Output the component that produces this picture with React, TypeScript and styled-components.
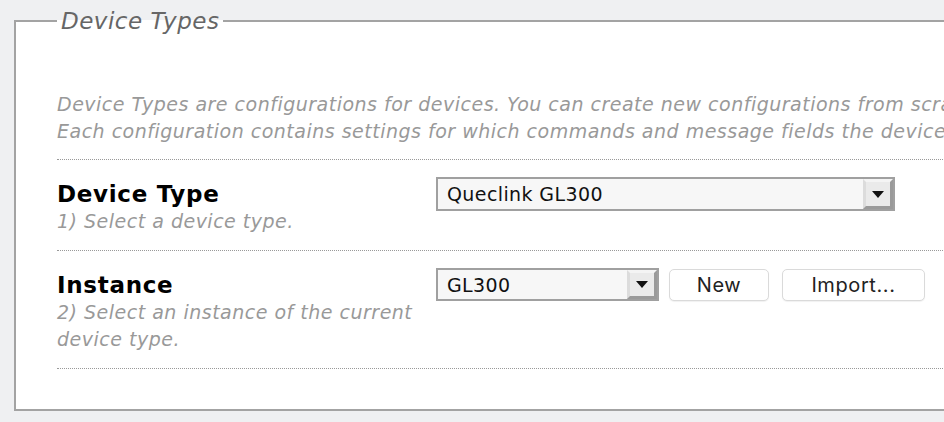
import React from "react";
import styled, { createGlobalStyle } from "styled-components";

const Global = createGlobalStyle`
  html, body { margin: 0; padding: 0; background: #eff0f2; overflow: hidden; }
  body { font-family: "DejaVu Sans", Verdana, sans-serif; }
`;

const Page = styled.div`
  width: 944px;
  height: 422px;
  overflow: hidden;
  padding: 8px 0 0 14px;
  box-sizing: border-box;
`;

const Fieldset = styled.fieldset`
  width: 1100px;
  margin: 0;
  padding: 57px 0 40px 41px;
  border: 2px solid #a3a3a3;
  background: #fff;
  box-sizing: border-box;
`;

const Legend = styled.legend`
  padding: 0 4px;
  font-size: 23px;
  letter-spacing: 0.5px;
  font-style: italic;
  color: #666;
  line-height: 26px;
`;

const Description = styled.p`
  margin: 0;
  font-size: 19px;
  letter-spacing: 0.5px;
  font-style: italic;
  color: #999;
  line-height: 27px;
  white-space: nowrap;
  padding-bottom: 14px;
  border-bottom: 1px dotted #999;
`;

const Row = styled.div`
  display: grid;
  grid-template-columns: 379px 1fr;
  align-items: start;
  padding: 17px 0 15px;
  border-bottom: 1px dotted #999;
`;

const Label = styled.div`
  display: flex;
  flex-direction: column;
  padding-top: 3px;
`;

const Title = styled.div`
  font-size: 23px;
  letter-spacing: 0.7px;
  font-weight: bold;
  color: #000;
  line-height: 28px;
`;

const Hint = styled.div`
  font-size: 19px;
  letter-spacing: 0.5px;
  font-style: italic;
  color: #999;
  line-height: 27px;
  width: 370px;
`;

const Controls = styled.div`
  display: flex;
  align-items: center;
`;

const Select = styled.div<{ $w: number; $h: number }>`
  width: ${(p) => p.$w}px;
  height: ${(p) => p.$h}px;
  box-sizing: border-box;
  border: 2px solid #a0a0a0;
  background: #f7f7f7;
  display: flex;
  align-items: stretch;
  font-size: 19px;
  letter-spacing: 0.4px;
  color: #111;
`;

const SelectText = styled.div`
  flex: 1;
  display: flex;
  align-items: center;
  padding-left: 9px;
`;

const Arrow = styled.div`
  width: 30px;
  box-sizing: border-box;
  background: #eaeaea;
  border-style: solid;
  border-width: 3px;
  border-color: #f4f4f4 #9a9a9a #9a9a9a #dcdcdc;
  display: flex;
  align-items: center;
  justify-content: center;
`;

const Tri = styled.div`
  width: 0;
  height: 0;
  border-left: 6px solid transparent;
  border-right: 6px solid transparent;
  border-top: 7px solid #111;
`;

const Button = styled.button<{ $w: number; $ml: number }>`
  width: ${(p) => p.$w}px;
  margin-left: ${(p) => p.$ml}px;
  height: 32px;
  box-sizing: border-box;
  border: 1px solid #dadada;
  border-radius: 5px;
  background: #fff;
  font-family: Inter, "Liberation Sans", Arial, sans-serif;
  font-size: 20px;
  letter-spacing: 0.6px;
  color: #222;
  padding: 0;
  box-shadow: 0 1px 1px rgba(0,0,0,0.06);
`;

export default function App() {
  return (
    <Page>
      <Global />
      <Fieldset>
        <Legend>Device Types</Legend>
        <Description>
          Device Types are configurations for devices. You can create new configurations from scratch or import existing ones.
          <br />
          Each configuration contains settings for which commands and message fields the device supports.
        </Description>
        <Row>
          <Label>
            <Title>Device Type</Title>
            <Hint>1) Select a device type.</Hint>
          </Label>
          <Controls>
            <Select $w={459} $h={34}>
              <SelectText>Queclink GL300</SelectText>
              <Arrow><Tri /></Arrow>
            </Select>
          </Controls>
        </Row>
        <Row>
          <Label>
            <Title>Instance</Title>
            <Hint>2) Select an instance of the current device type.</Hint>
          </Label>
          <Controls>
            <Select $w={223} $h={33}>
              <SelectText>GL300</SelectText>
              <Arrow><Tri /></Arrow>
            </Select>
            <Button $w={100} $ml={10}>New</Button>
            <Button $w={143} $ml={13}>Import...</Button>
          </Controls>
        </Row>
      </Fieldset>
    </Page>
  );
}
